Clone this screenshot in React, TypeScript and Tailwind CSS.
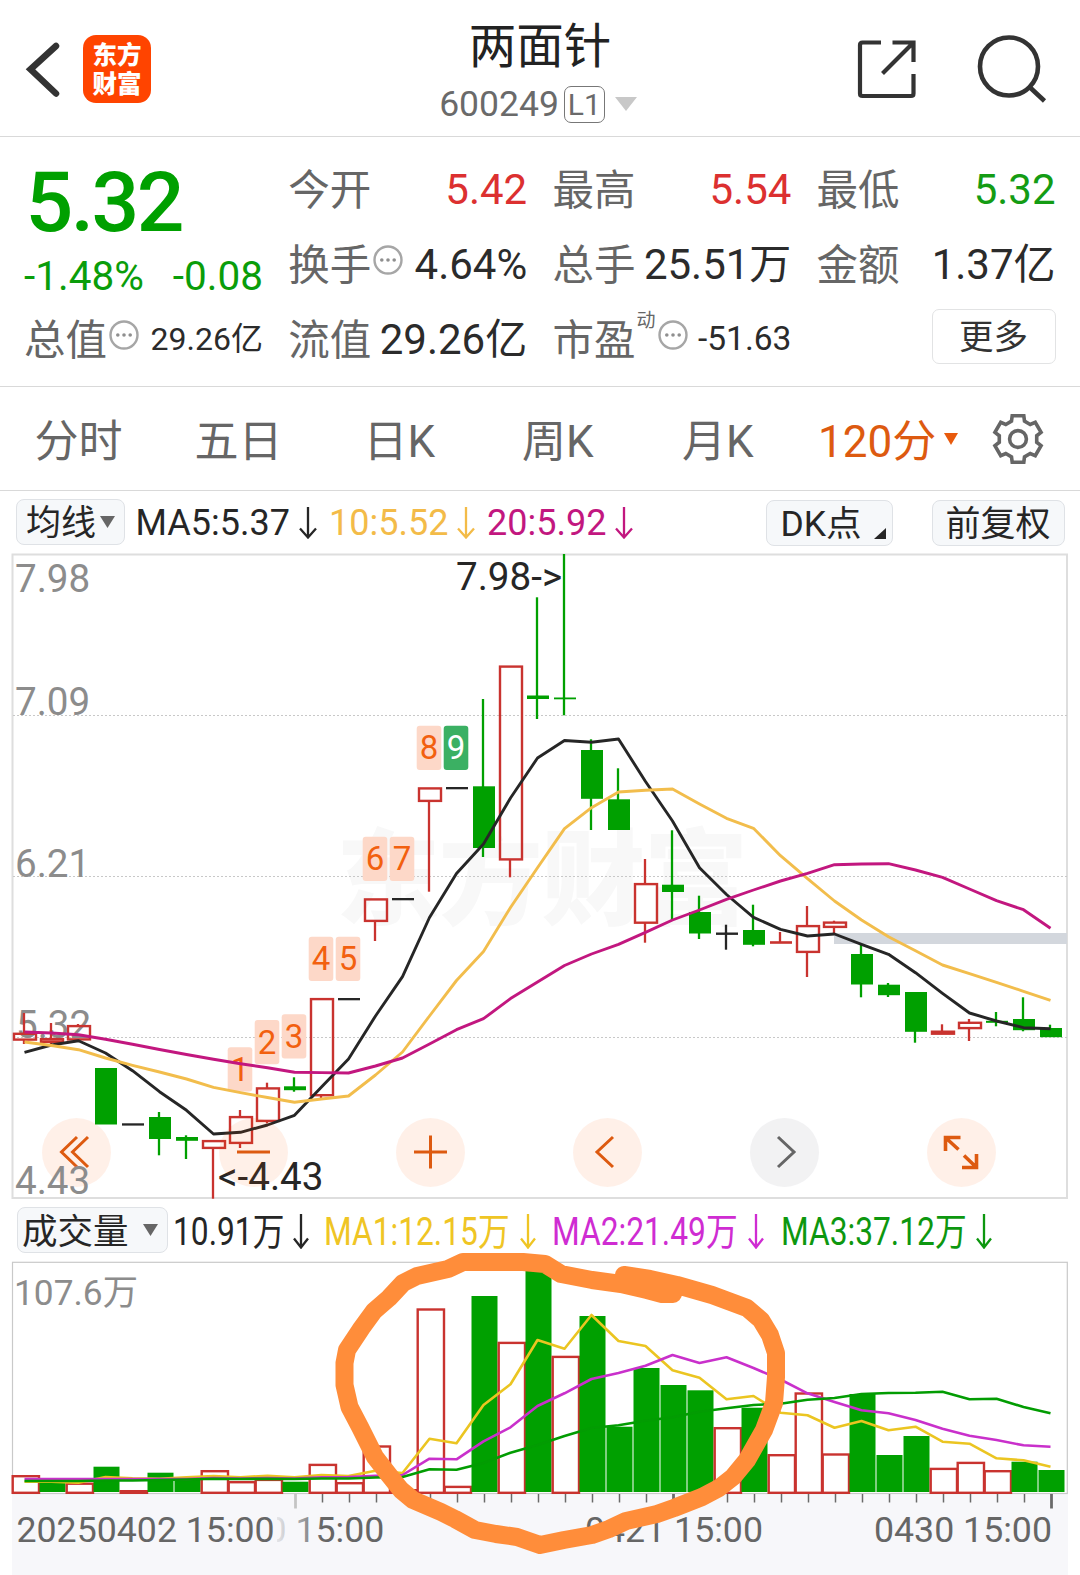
import type { ReactNode } from 'react';
import clsx from 'clsx';

const GREEN = '#00a000';
const RED = '#c9332f';
const BLACK = '#262626';

type Candle = { k: 'up' | 'down' | 'flat'; o: number; c: number; h?: number; l?: number };

// top / bottom of the body, then optional top / bottom of the wick
const candles: Candle[] = [
  { k: 'up', o: 1032.7, c: 1040.7, h: 1013, l: 1044 },
  { k: 'up', o: 1038, c: 1043, h: 1023, l: 1046.5 },
  { k: 'up', o: 1025, c: 1040.5, h: 1024 },
  { k: 'down', o: 1068, c: 1124.5 },
  { k: 'flat', o: 1123.3, c: 1125.6 },
  { k: 'down', o: 1117, c: 1139, h: 1112, l: 1155.3 },
  { k: 'down', o: 1137, c: 1140.8, h: 1135.3, l: 1159 },
  { k: 'up', o: 1140, c: 1149, l: 1198.7 },
  { k: 'up', o: 1116, c: 1144, h: 1110, l: 1148 },
  { k: 'up', o: 1087.3, c: 1122, h: 1082.7, l: 1123.3 },
  { k: 'down', o: 1086.3, c: 1090.2, h: 1077.3, l: 1091.7 },
  { k: 'up', o: 998, c: 1096.3, l: 1098.5 },
  { k: 'flat', o: 998, c: 1000.3 },
  { k: 'up', o: 898.3, c: 922, l: 941 },
  { k: 'flat', o: 898, c: 900.3 },
  { k: 'up', o: 787.3, c: 802, l: 891.7 },
  { k: 'flat', o: 787, c: 789.3 },
  { k: 'down', o: 786.3, c: 848, h: 699, l: 857 },
  { k: 'up', o: 665.5, c: 860.5, l: 877.3 },
  { k: 'down', o: 695.5, c: 699, h: 597.3, l: 719 },
  { k: 'down', o: 697.5, c: 699.3, h: 554, l: 715.3 },
  { k: 'down', o: 750, c: 798.8, h: 739.3, l: 830 },
  { k: 'down', o: 799.3, c: 830, h: 768.3 },
  { k: 'up', o: 883, c: 923.8, h: 859, l: 942.7 },
  { k: 'down', o: 884.7, c: 892, h: 830.3, l: 920 },
  { k: 'down', o: 912, c: 933.5, h: 895.7, l: 939 },
  { k: 'flat', o: 932.5, c: 934.9, h: 924.7, l: 949.7 },
  { k: 'down', o: 930, c: 944.8, h: 904.7, l: 946.3 },
  { k: 'up', o: 941.2, c: 943.8, h: 932 },
  { k: 'up', o: 925, c: 953, h: 906, l: 977 },
  { k: 'up', o: 921.5, c: 928, h: 920.7, l: 935 },
  { k: 'down', o: 954, c: 984.5, h: 945, l: 997.3 },
  { k: 'down', o: 984.7, c: 995.2, h: 983, l: 997 },
  { k: 'down', o: 992, c: 1031.8, l: 1042.7 },
  { k: 'up', o: 1030.6, c: 1034.8, h: 1024.3 },
  { k: 'up', o: 1021.7, c: 1029.2, h: 1019, l: 1041 },
  { k: 'down', o: 1020.8, c: 1022.8, h: 1012, l: 1026.3 },
  { k: 'down', o: 1019, c: 1030.2, h: 997.3, l: 1031.3 },
  { k: 'down', o: 1028, c: 1037.2, h: 1024.7 },
];

const ma5 = [
  1052.3, 1045, 1040.7, 1053, 1070.7, 1091.7, 1110.3, 1134, 1132.3, 1125, 1115.3, 1087, 1059, 1016, 976.6, 917.5, 873.5, 844, 798, 758,
  740.5, 742.3, 739, 781.5, 821, 867.7, 894.5, 917.3, 929.3, 936, 934, 944.3, 954.3, 972.7, 993.3, 1013, 1021, 1027.7, 1028.7,
];
const ma10 = [
  1042, 1045.5, 1049.7, 1058, 1065.3, 1072, 1079, 1087.3, 1092.7, 1097.5, 1102.3, 1099, 1096, 1075, 1052, 1016, 980.5, 951.5, 907.5,
  867.7, 828.7, 807.7, 792, 790.3, 789, 804, 818.3, 828.3, 855.7, 878.7, 901, 920, 936.7, 950.7, 965, 973.7, 982.3, 991.3, 1000.3,
];
const ma20 = [
  1032, 1033, 1034.7, 1039.3, 1044.3, 1049.5, 1054.5, 1059.3, 1063.7, 1067.7, 1072.3, 1072.6, 1073, 1066, 1058, 1044, 1029.7, 1018.7,
  998.6, 982, 965.5, 954, 944.3, 932.3, 920, 910, 899.3, 890, 881, 873.3, 864.7, 864, 863.7, 870, 877.3, 889, 900.7, 909.7, 928.3,
];

const volumes: [string, number][] = [
  ['r', 1475], ['g', 1481], ['r', 1482.5], ['g', 1466.7], ['r', 1490], ['g', 1472.7], ['g', 1479], ['r', 1470], ['r', 1481],
  ['r', 1478.7], ['g', 1481.7], ['r', 1463.7], ['r', 1482], ['r', 1445.3], ['r', 1489], ['r', 1308.3], ['r', 1485.7], ['g', 1296],
  ['r', 1341.7], ['g', 1267], ['r', 1355.7], ['g', 1316], ['g', 1426.7], ['g', 1368], ['g', 1385], ['g', 1390.3], ['r', 1427],
  ['g', 1407.7], ['r', 1454], ['r', 1392.3], ['r', 1453.3], ['g', 1394], ['g', 1455], ['g', 1436], ['r', 1467.7], ['r', 1461.7],
  ['r', 1470], ['g', 1461.7], ['g', 1470],
];
const vol1 = [
  1481.7, 1481.7, 1482.7, 1477, 1478.3, 1478.7, 1477.3, 1476, 1477.3, 1475.7, 1477.3, 1475, 1476, 1470.7, 1473, 1438.7, 1443.3, 1405,
  1384.3, 1340, 1348.7, 1315, 1341, 1346, 1370.3, 1377.7, 1399.3, 1396, 1412.7, 1415.3, 1427.7, 1421, 1430.3, 1426.7, 1441.7, 1443.7,
  1458.3, 1460.3, 1466.7,
];
const vol2 = [
  1479, 1479, 1479, 1479, 1479, 1479, 1479, 1478, 1478.5, 1478, 1478.5, 1477.3, 1477, 1475.7, 1475, 1458.7, 1459.3, 1441.3, 1427.3,
  1406, 1393.3, 1379, 1373, 1365.7, 1355, 1363, 1357.3, 1368, 1379.5, 1393.3, 1402, 1410.3, 1413.3, 1420, 1428.7, 1435.7, 1440, 1445.3,
  1446.7,
];
const vol3 = [
  1481, 1481, 1481, 1480.5, 1480.5, 1480, 1479.5, 1478.7, 1479, 1478.7, 1479, 1478.5, 1478.5, 1477.5, 1477, 1469.3, 1469.7, 1463, 1452.7,
  1445, 1436, 1428, 1425.3, 1420.7, 1417.3, 1411.7, 1408.3, 1405, 1403.7, 1399.7, 1398, 1394, 1393, 1392.7, 1391.7, 1399.3, 1398.7,
  1407, 1413.3,
];

const badges = [
  { n: 1, i: 8, y: 1047.3 },
  { n: 2, i: 9, y: 1020 },
  { n: 3, i: 10, y: 1014.3 },
  { n: 4, i: 11, y: 936.7 },
  { n: 5, i: 12, y: 936.7 },
  { n: 6, i: 13, y: 836.7 },
  { n: 7, i: 14, y: 836.7 },
  { n: 8, i: 15, y: 725.7 },
  { n: 9, i: 16, y: 725.7 },
];

const cx = (i: number) => 24 + i * 27;
const line = (ys: number[]) => ys.map((y, i) => `${cx(i) + 0.5},${y}`).join(' ');

const gearPoints = [0, 60, 120, 180, 240, 300]
  .flatMap((a) => [[a - 20, 19], [a - 14, 24], [a + 14, 24], [a + 20, 19]])
  .map(([a, r]) => `${26 + r * Math.sin((a * Math.PI) / 180)},${26 - r * Math.cos((a * Math.PI) / 180)}`)
  .join(' ');

function More({ className }: { className?: string }) {
  return (
    <svg className={clsx('shrink-0', className)} width="30" height="30" viewBox="0 0 30 30">
      <circle cx="15" cy="15" r="13.5" fill="none" stroke="#a6a6a6" strokeWidth="2.4" />
      <circle cx="8.8" cy="15" r="1.8" fill="#8f8f8f" />
      <circle cx="15" cy="15" r="1.8" fill="#8f8f8f" />
      <circle cx="21.2" cy="15" r="1.8" fill="#8f8f8f" />
    </svg>
  );
}

function Arrow({ w, h, className }: { w: number; h: number; className?: string }) {
  return (
    <svg className={clsx('shrink-0', className)} width={w} height={h} fill="none" stroke="currentColor" strokeWidth="2.3">
      <path d={`M${w / 2} 0V${h - 2}M1 ${h - 10.5}L${w / 2} ${h - 1.5}L${w - 1} ${h - 10.5}`} />
    </svg>
  );
}

function Down({ w, h, className }: { w: number; h: number; className?: string }) {
  return (
    <svg className={clsx('shrink-0', className)} width={w} height={h} fill="currentColor">
      <path d={`M0 0H${w}L${w / 2} ${h}Z`} />
    </svg>
  );
}

type StatProps = { label: string; children: ReactNode; color?: string; size?: string; extra?: ReactNode };

function Stat({ label, children, color = 'text-[#2b2b2b]', size = 'text-[42px]', extra }: StatProps) {
  return (
    <div className="flex h-[75px] items-center justify-between whitespace-nowrap">
      <div className="flex items-center text-[41.500px] text-[#666]">
        <span className="pt-[5px]">{label}</span>
        {extra}
      </div>
      <div className={clsx('pt-[1px]', size, color)}>{children}</div>
    </div>
  );
}

function Header() {
  return (
    <header className="flex h-[137px] border-b border-[#d9d9d9]">
      <div className="flex w-[390px] pl-[24px] pt-[35px]">
        <svg width="40" height="68" viewBox="0 0 40 68" fill="none" stroke="#333" strokeWidth="6.5" strokeLinecap="round">
          <path d="M32 11L6.500 34.300L32 58.500" strokeLinejoin="miter" />
        </svg>
        <div className="ml-[19px] flex h-[68px] w-[68px] flex-col items-center justify-center rounded-[13px] bg-[#ff4400] pt-[2px] text-[24.500px] leading-[29px] font-black text-white">
          <span>东方</span>
          <span>财富</span>
        </div>
      </div>
      <div className="flex w-[300px] flex-col items-center pt-[20px]">
        <h1 className="text-[47.500px] leading-[54px] text-[#222]">两面针</h1>
        <div className="mt-[8px] mr-[4px] flex h-[44px] items-center text-[35.500px] text-[#6a6a6a]">
          <span className="pt-[1px]">600249</span>
          <span className="ml-[5px] flex h-[37px] w-[41px] items-center justify-center rounded-[7px] border-[1.500px] border-[#777] text-[30px]">L1</span>
          <Down w={22} h={14} className="ml-[10px] text-[#c8c8c8]" />
        </div>
      </div>
      <div className="flex grow pl-[166px] pt-[34px] text-[#333]">
        <svg width="62" height="68" viewBox="0 0 62 68" fill="none" stroke="currentColor" strokeWidth="4.2">
          <path d="M25 8.500H6.500Q4 8.500 4 11V59.500Q4 62 6.500 62H55Q57.500 62 57.500 59.500V40M36.500 8.500H57.500V28M56.500 9.500L26.500 39.500" />
        </svg>
        <svg className="ml-[58px]" width="76" height="70" viewBox="0 0 76 70" fill="none" stroke="currentColor" strokeWidth="4.6">
          <circle cx="33" cy="32.500" r="29" />
          <path d="M53 52.500L68.500 67" />
        </svg>
      </div>
    </header>
  );
}

function Quote() {
  return (
    <section className="grid h-[250px] grid-cols-[239px_239px_239px_239px] gap-x-[25.200px] border-b border-[#d9d9d9] pl-[24px] pt-[14px]">
      <div>
        <div className="h-[98px] pt-[1px] pl-[1.500px] text-[84px] leading-[101px] font-medium tracking-[-2.500px] text-[#00a000]">5.32</div>
        <div className="flex h-[52px] items-center justify-between pt-[3px] text-[40.500px] text-[#0a9d0a]">
          <span>-1.48%</span>
          <span>-0.08</span>
        </div>
        <Stat label="总值" size="text-[32px]" extra={<More className="mt-[-8px] ml-[2px]" />}>
          29.26亿
        </Stat>
      </div>
      <div>
        <Stat label="今开" color="text-[#dc3030]">5.42</Stat>
        <Stat label="换手" extra={<More className="mt-[-8px] ml-[2px]" />}>4.64%</Stat>
        <Stat label="流值">29.26亿</Stat>
      </div>
      <div>
        <Stat label="最高" color="text-[#dc3030]">5.54</Stat>
        <Stat label="总手">25.51万</Stat>
        <Stat
          label="市盈"
          size="text-[33.500px]"
          extra={
            <>
              <span className="mt-[-34px] ml-[1px] text-[19px]">动</span>
              <More className="mt-[-8px] ml-[3px]" />
            </>
          }
        >
          -51.63
        </Stat>
      </div>
      <div>
        <Stat label="最低" color="text-[#149c14]">5.32</Stat>
        <Stat label="金额">1.37亿</Stat>
        <div className="mt-[7.500px] ml-auto flex h-[55px] w-[124px] items-center justify-center rounded-[7px] border-[1.500px] border-[#e2e3e4] pt-[4px] text-[34.500px] text-[#333]">
          更多
        </div>
      </div>
    </section>
  );
}

function Tabs() {
  return (
    <nav className="flex h-[104px] items-center border-b border-[#d9d9d9] pl-[34.500px] text-[44px] whitespace-nowrap text-[#666]">
      <span className="w-[160px] pt-[6px]">分时</span>
      <span className="w-[169px] pt-[6px]">五日</span>
      <span className="w-[158.500px] pt-[6px]">日K</span>
      <span className="w-[160px] pt-[6px]">周K</span>
      <span className="w-[136px] pt-[6px]">月K</span>
      <span className="w-[126px] pt-[6px] text-[#dd5a10]">120分</span>
      <Down w={14} h={12} className="text-[#e85a0c]" />
      <svg className="ml-[34px]" width="52" height="52" viewBox="0 0 52 52" fill="none" stroke="#666" strokeWidth="3.6">
        <polygon points={gearPoints} />
        <circle cx="26" cy="26" r="8.400" />
      </svg>
    </nav>
  );
}

function Pill({ className, children }: { className?: string; children: ReactNode }) {
  return (
    <div className={clsx('flex h-[46px] shrink-0 items-center rounded-[8px] border-[1.500px] border-[#dfe2e6] bg-[#f6f8fa] text-[35px] text-[#262626]', className)}>
      {children}
    </div>
  );
}

function MaLegend() {
  return (
    <div className="flex h-[63px] items-center pl-[16px] text-[36px] whitespace-nowrap">
      <Pill className="mt-[-2px] w-[109px] pl-[9px]">
        <span className="pt-[6px]">均线</span>
        <Down w={15} h={12} className="ml-[4px] text-[#666]" />
      </Pill>
      <div className="flex w-[193px] items-center pl-[10.500px] text-[#262626]">
        <span className="w-[163.500px] pt-[1px]">MA5:5.37</span>
        <Arrow w={18} h={32} />
      </div>
      <div className="flex w-[157px] items-center pl-[11px] text-[#f3bb48]">
        <span className="w-[128px] pt-[1px]">10:5.52</span>
        <Arrow w={18} h={32} />
      </div>
      <div className="flex w-[290.500px] items-center pl-[12px] text-[#c2177f]">
        <span className="w-[128px] pt-[1px]">20:5.92</span>
        <Arrow w={18} h={32} />
      </div>
      <Pill className="w-[127px] pl-[14px]">
        <span className="pt-[4px] text-[35.500px]">DK点</span>
        <svg className="mt-[22px] ml-[12px]" width="12" height="11" fill="#262626">
          <path d="M12 0V11H0Z" />
        </svg>
      </Pill>
      <Pill className="ml-[39px] w-[133px] justify-center">
        <span className="pt-[5px]">前复权</span>
      </Pill>
    </div>
  );
}

function PriceChart() {
  return (
    <div className="relative h-[645px]">
      <svg className="block overflow-visible" width="1080" height="645" viewBox="0 554 1080 645">
        <text x="336" y="917" fontSize="104" fontWeight="900" fill="#f8f8f8" textLength="412">
          东方财富
        </text>
        <rect x="12.500" y="554.500" width="1054.500" height="643.500" fill="none" stroke="#dedede" strokeWidth="2" />
        {[715.5, 876.5, 1037.5].map((y) => (
          <path key={y} d={`M13 ${y}H1067`} stroke="#c8c8c8" strokeWidth="1" strokeDasharray="2 2" />
        ))}
        <g fontSize="38.600" fill="#8c8c8c">
          <text x="15" y="591.500">7.98</text>
          <text x="15" y="714.500">7.09</text>
          <text x="15" y="876.500">6.21</text>
          <text x="16" y="1037.500">5.32</text>
        </g>
        <rect x="834" y="933" width="233" height="11" fill="#d3d7dd" />
        {candles.map(({ k, o, c, h, l }, i) => {
          const x = cx(i);
          const color = k === 'up' ? RED : k === 'down' ? GREEN : BLACK;
          const hollow = k === 'up' && c - o > 3;
          return (
            <g key={i}>
              {h && <path d={`M${x} ${h}V${o + 1}`} stroke={color} strokeWidth="2.300" />}
              {l && <path d={`M${x} ${hollow ? c - 1 : o}V${l}`} stroke={color} strokeWidth="2.300" />}
              {hollow ? (
                <rect x={x - 10} y={o + 1.1} width="22" height={c - o - 2.2} fill={c - o < 6 ? '#e88a86' : 'none'} stroke={color} strokeWidth="2.400" />
              ) : (
                <rect x={x - 10} y={o} width="22" height={c - o} fill={color} />
              )}
            </g>
          );
        })}
        {badges.map(({ n, i, y }) => (
          <g key={n}>
            <rect x={cx(i) - 12.3} y={y} width="24.600" height="44.300" rx="3" fill={n === 9 ? '#3bb063' : '#fdd8c8'} />
            <text x={cx(i)} y={y + 33.5} fontSize="33" textAnchor="middle" fill={n === 9 ? '#fff' : '#f2600f'}>
              {n}
            </text>
          </g>
        ))}
        <g fill="none" strokeWidth="2.900" strokeLinejoin="round">
          <polyline points={line(ma5)} stroke={BLACK} />
          <polyline points={line(ma10)} stroke="#f2bd4c" />
          <polyline points={line(ma20)} stroke="#c2177f" />
        </g>
        <g fontSize="38.600" fill="#262626">
          <text x="456" y="590">7.98-&gt;</text>
          <text x="218" y="1190">&lt;-4.43</text>
        </g>
      </svg>
      <div className="absolute top-[564px] left-[42px] flex gap-[108px] text-[#dd5a10]">
        {[
          'M35 19L19.500 34L35 49M46 19L30.500 34L46 49',
          'M18 34H51',
          'M18 34H51M34.500 17.500V50.500',
          'M40 19L24 34L40 49',
          'M28 19L44 34L28 49',
          'M18.500 33V19.500H33.500M19.500 20.500L31.500 31.500M37 37.500L48.500 48.500M35 49.500H49.500V36',
        ].map((d, i) => (
          <svg
            key={d}
            className={clsx('rounded-full', i === 4 ? 'bg-[#00000d]/5 text-[#666]' : 'bg-[#ff5500]/9')}
            width="69"
            height="69"
            fill="none"
            stroke="currentColor"
            strokeWidth={i === 5 ? 3.6 : 3}
          >
            <path d={d} />
          </svg>
        ))}
      </div>
      <div className="absolute top-[604px] left-[15px] text-[38.600px] leading-[46px] text-[#8c8c8c]">4.43</div>
    </div>
  );
}

function VolumeLegend() {
  return (
    <div className="flex h-[62px] items-center pl-[17px] text-[38px] whitespace-nowrap">
      <Pill className="w-[151px] pl-[4px]">
        <span className="pt-[6px] text-[35.500px]">成交量</span>
        <Down w={15} h={12} className="ml-[14px] text-[#666]" />
      </Pill>
      <div className="flex w-[156px] items-center pl-[4.500px] text-[#262626]">
        <span className="w-[120.500px] origin-left scale-x-[0.835] pt-[4px]">10.91万</span>
        <Arrow w={16} h={35} className="mt-[2px]" />
      </div>
      <div className="flex w-[228px] items-center text-[#efc524]">
        <span className="w-[196px] origin-left scale-x-[0.835] pt-[4px]">MA1:12.15万</span>
        <Arrow w={16} h={35} className="mt-[2px]" />
      </div>
      <div className="flex w-[229px] items-center text-[#cf2cd2]">
        <span className="w-[196px] origin-left scale-x-[0.835] pt-[4px]">MA2:21.49万</span>
        <Arrow w={16} h={35} className="mt-[2px]" />
      </div>
      <div className="flex items-center text-[#0d970f]">
        <span className="w-[195px] origin-left scale-x-[0.835] pt-[4px]">MA3:37.12万</span>
        <Arrow w={16} h={35} className="mt-[2px]" />
      </div>
    </div>
  );
}

const marker =
  'M624 1275L650 1279L677 1285L712 1295L747 1308L761 1320L770 1335L776 1353L776 1377L774 1403L764 1430L747 1460L733 1477L719 1488L702 1497L674 1508L657 1514L626 1521L609 1529L592 1535L564 1540L540 1545L517 1537L496 1534L475 1530L455 1519L441 1512L413 1500L401 1490L389 1475L375 1457L360 1427L349.500 1407L344.500 1385L344.500 1363L347 1350L361.600 1328L374 1311L389 1298L403 1283L417 1276L448 1269L463 1262L523 1262L545 1264L561 1274L592 1280L621 1284L647 1290L662 1294L673 1294';

function VolumeChart() {
  return (
    <svg className="block overflow-visible" width="1080" height="314" viewBox="0 1261 1080 314">
      <defs>
        <linearGradient id="fade" x1="0" x2="1">
          <stop offset="0" stopColor="#f7f7fa" />
          <stop offset="0.250" stopColor="#f7f7fa" stopOpacity="0.850" />
          <stop offset="1" stopColor="#f7f7fa" stopOpacity="0" />
        </linearGradient>
      </defs>
      <rect x="12" y="1494" width="1056" height="81" fill="#f7f7fa" />
      <rect x="12.500" y="1262.300" width="1054.800" height="231.200" fill="#fff" stroke="#c9c9c9" strokeWidth="1.200" />
      <text x="14" y="1305" fontSize="35.300" fill="#8c8c8c">107.6万</text>
      {volumes.map(([c, y], i) =>
        c === 'g' ? (
          <rect key={i} x={cx(i) - 11.5} y={y} width="26" height={1492 - y} fill={GREEN} />
        ) : (
          <rect key={i} x={cx(i) - 11.3} y={y + 1.2} width="26.300" height={Math.max(1491.6 - y, 0.6)} fill="#fff" stroke={RED} strokeWidth="2.400" />
        ),
      )}
      <g fill="none" strokeWidth="2.600" strokeLinejoin="round">
        <polyline points={line(vol1)} stroke="#ebc521" />
        <polyline points={line(vol2)} stroke="#c930cb" />
        <polyline points={line(vol3)} stroke="#029c02" />
      </g>
      {volumes.map((_, i) => {
        if (i < 10) return null;
        const major = i === 10 || i === 24 || i === 38;
        return (
          <path
            key={i}
            d={`M${cx(i) + 1.5} 1494V${major ? 1508.5 : 1502.5}`}
            stroke={i === 10 ? '#c4c4c4' : '#6a6a6a'}
            strokeWidth={major ? 2.8 : 1.5}
          />
        );
      })}
      <g fontSize="35.700" fill="#666">
        <text x="266.500" y="1541.500">0 15:00</text>
        <rect x="264" y="1512" width="58" height="34" fill="url(#fade)" />
        <rect x="264" y="1512" width="13" height="34" fill="#f7f7fa" />
        <text x="16.500" y="1541.500">20250402 15:00</text>
        <text x="585" y="1541.500">0421 15:00</text>
        <text x="874" y="1541.500">0430 15:00</text>
      </g>
      <path d={marker} fill="none" stroke="#ff8d3a" strokeWidth="18" strokeLinecap="round" strokeLinejoin="round" />
    </svg>
  );
}

export default function App() {
  return (
    <main className="h-[1575px] w-[1080px] overflow-hidden bg-white font-[Roboto,'Noto_Sans_CJK_SC',sans-serif]">
      <Header />
      <Quote />
      <Tabs />
      <MaLegend />
      <PriceChart />
      <VolumeLegend />
      <VolumeChart />
    </main>
  );
}
